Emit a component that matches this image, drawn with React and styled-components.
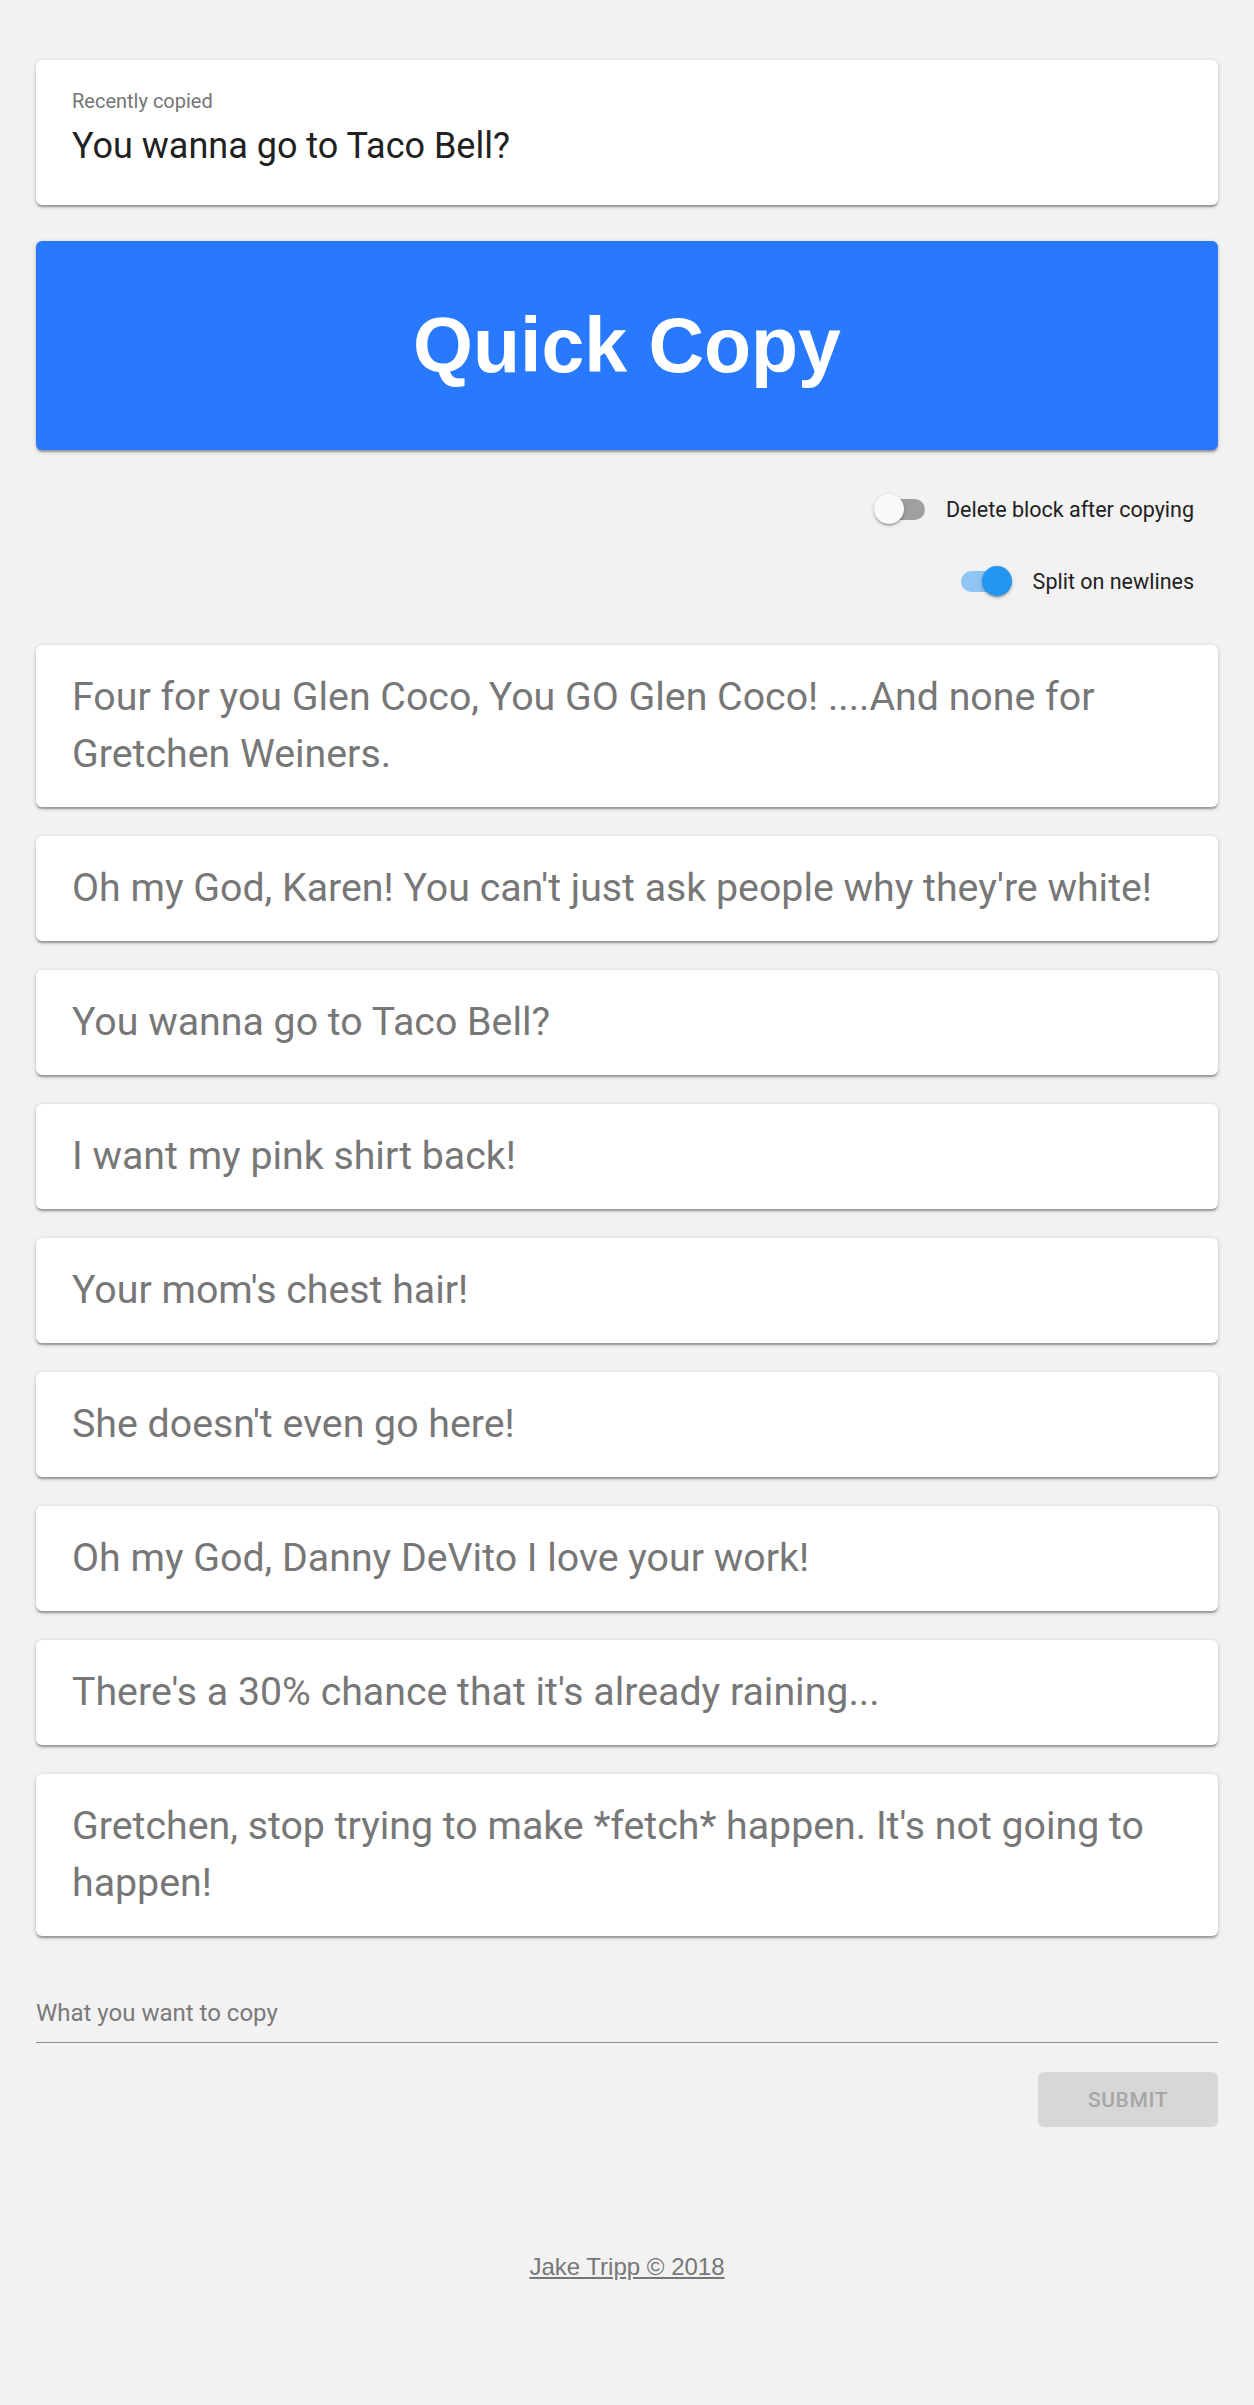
import styled, { createGlobalStyle } from 'styled-components';
import { useState } from 'react';

const GlobalStyle = createGlobalStyle`
  html, body {
    margin: 0;
    padding: 0;
    background: #f2f2f2;
  }
  body {
    font-family: Roboto, "Liberation Sans", Arial, sans-serif;
  }
  * {
    box-sizing: border-box;
  }
`;

const paperShadow = `
  0 1.5px 4.5px 0 rgba(0, 0, 0, 0.2),
  0 1.5px 1.5px 0 rgba(0, 0, 0, 0.14),
  0 3px 1.5px -1.5px rgba(0, 0, 0, 0.12)
`;

const Page = styled.div`
  display: flex;
  flex-direction: column;
  padding: 60px 36px 123px;
`;

const RecentCard = styled.div`
  background: #fff;
  border-radius: 6px;
  box-shadow: ${paperShadow};
  padding: 29px 36px 38px;
  display: flex;
  flex-direction: column;
`;

const Caption = styled.span`
  font-size: 20px;
  line-height: 24px;
  color: #757575;
  margin-bottom: 12px;
`;

const RecentText = styled.span`
  font-size: 36px;
  line-height: 42px;
  color: #212121;
`;

const QuickButton = styled.button`
  margin-top: 36px;
  height: 209px;
  border: none;
  border-radius: 6px;
  background: #2979ff;
  box-shadow: ${paperShadow};
  color: #fff;
  font-family: "Liberation Sans", Arial, Helvetica, sans-serif;
  font-weight: 700;
  font-size: 77px;
  cursor: pointer;
`;

const Options = styled.div`
  margin-top: 23px;
  display: flex;
  flex-direction: column;
`;

const OptionRow = styled.label`
  height: 72px;
  display: flex;
  justify-content: flex-end;
  align-items: center;
  padding-right: 24px;
  cursor: pointer;
`;

const Track = styled.span`
  position: relative;
  width: 51px;
  height: 21px;
  border-radius: 10.5px;
  margin-right: 21px;
  background: ${p => (p.$on ? '#8fc6f4' : '#a0a0a0')};
`;

const Thumb = styled.span`
  position: absolute;
  top: -4.5px;
  left: ${p => (p.$on ? '21px' : '0')};
  width: 30px;
  height: 30px;
  border-radius: 50%;
  background: ${p => (p.$on ? '#2196f3' : '#fafafa')};
  box-shadow: 0 1.5px 4.5px 0 rgba(0, 0, 0, 0.2), 0 1.5px 1.5px 0 rgba(0, 0, 0, 0.14),
    0 3px 1.5px -1.5px rgba(0, 0, 0, 0.12);
`;

const OptionLabel = styled.span`
  font-size: 21.5px;
  color: #212121;
`;

const BlockList = styled.div`
  margin-top: 28px;
  display: flex;
  flex-direction: column;
  gap: 29px;
`;

const Block = styled.div`
  background: #fff;
  border-radius: 6px;
  box-shadow: ${paperShadow};
  padding: 24px 36px;
  font-size: 39.3px;
  line-height: 57px;
  color: #777;
  cursor: pointer;
`;

const Field = styled.div`
  margin-top: 63px;
  padding-bottom: 15px;
  border-bottom: 1.5px solid #8c8c8c;
`;

const FieldLabel = styled.span`
  display: block;
  font-size: 24px;
  line-height: 28px;
  color: #7a7a7a;
`;

const Actions = styled.div`
  margin-top: 29px;
  display: flex;
  justify-content: flex-end;
`;

const SubmitButton = styled.button`
  width: 180px;
  height: 55px;
  border: none;
  border-radius: 6px;
  background: #d7d7d7;
  color: #a6a6a6;
  font-family: Roboto, sans-serif;
  font-size: 21px;
  font-weight: 500;
  letter-spacing: 0.6px;
  text-transform: uppercase;
`;

const Footer = styled.footer`
  margin-top: 126px;
  text-align: center;
  font-family: "Liberation Sans", Arial, sans-serif;
  font-size: 24px;
  line-height: 28px;
`;

const FooterLink = styled.a`
  color: #777;
  text-decoration: underline;
`;

const blocks = [
  'Four for you Glen Coco, You GO Glen Coco! ....And none for Gretchen Weiners.',
  "Oh my God, Karen! You can't just ask people why they're white!",
  'You wanna go to Taco Bell?',
  'I want my pink shirt back!',
  "Your mom's chest hair!",
  "She doesn't even go here!",
  'Oh my God, Danny DeVito I love your work!',
  "There's a 30% chance that it's already raining...",
  "Gretchen, stop trying to make *fetch* happen. It's not going to happen!",
];

function Toggle({ on, label, onToggle }) {
  return (
    <OptionRow onClick={onToggle}>
      <Track $on={on}>
        <Thumb $on={on} />
      </Track>
      <OptionLabel>{label}</OptionLabel>
    </OptionRow>
  );
}

export default function App() {
  const [deleteAfter, setDeleteAfter] = useState(false);
  const [split, setSplit] = useState(true);
  const [recent, setRecent] = useState('You wanna go to Taco Bell?');

  return (
    <>
      <GlobalStyle />
      <Page>
        <RecentCard>
          <Caption>Recently copied</Caption>
          <RecentText>{recent}</RecentText>
        </RecentCard>
        <QuickButton>Quick Copy</QuickButton>
        <Options>
          <Toggle on={deleteAfter} label="Delete block after copying" onToggle={() => setDeleteAfter(!deleteAfter)} />
          <Toggle on={split} label="Split on newlines" onToggle={() => setSplit(!split)} />
        </Options>
        <BlockList>
          {blocks.map(text => (
            <Block key={text} onClick={() => setRecent(text)}>
              {text}
            </Block>
          ))}
        </BlockList>
        <Field>
          <FieldLabel>What you want to copy</FieldLabel>
        </Field>
        <Actions>
          <SubmitButton disabled>Submit</SubmitButton>
        </Actions>
        <Footer>
          <FooterLink href="#">Jake Tripp © 2018</FooterLink>
        </Footer>
      </Page>
    </>
  );
}
